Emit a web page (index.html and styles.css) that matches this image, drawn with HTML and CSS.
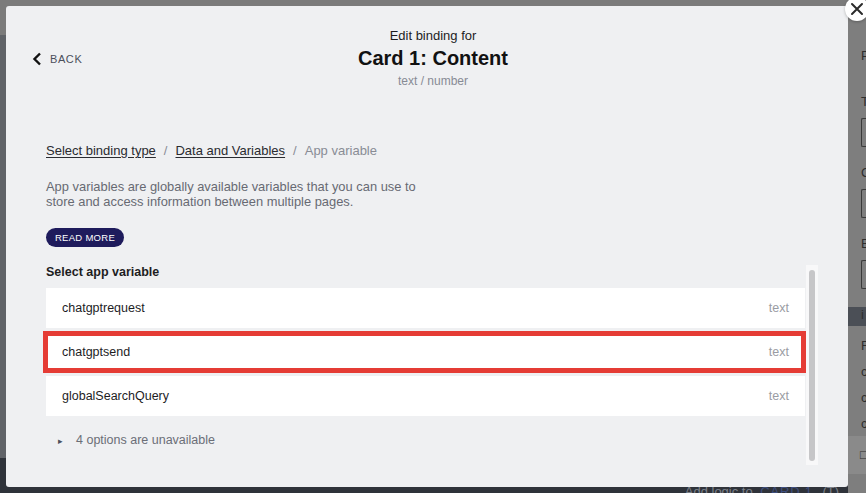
FILE: index.html
```html
<!DOCTYPE html>
<html lang="en">
<head>
    <meta charset="UTF-8">
    <meta name="viewport" content="width=device-width, initial-scale=1.0">
    <title>Edit binding</title>
    <link rel="stylesheet" href="styles.css">
</head>
<body>
    <div class="app">
        <div class="canvas">
            <div class="canvas-top"></div>
            <div class="canvas-mid"></div>
            <div class="canvas-bottom">
                <span class="logic">Add logic to <span class="logic-card">CARD 1</span> (T)</span>
            </div>
        </div>
        <div class="props">
            <div class="props-label first">P</div>
            <div class="props-label">T</div>
            <div class="props-box"></div>
            <div class="props-label">C</div>
            <div class="props-box"></div>
            <div class="props-label">E</div>
            <div class="props-box"></div>
            <div class="props-band">i</div>
            <div class="props-label small">F</div>
            <div class="props-label small">c</div>
            <div class="props-label small">c</div>
            <div class="props-label small">c</div>
            <div class="props-light">&#9633;</div>
        </div>
    </div>

    <div class="modal">
        <button class="close-btn" aria-label="Close">
            <svg width="14" height="14" viewBox="0 0 14 14"><path d="M2 2 L12 12 M12 2 L2 12" stroke="#2b2b2b" stroke-width="2" stroke-linecap="round"/></svg>
        </button>

        <div class="modal-header">
            <a class="back">
                <svg width="10" height="14" viewBox="0 0 10 14"><path d="M8 1.5 L2.5 7 L8 12.5" fill="none" stroke="#111" stroke-width="2.4"/></svg>
                <span>BACK</span>
            </a>
            <div class="title-block">
                <div class="title-pre">Edit binding for</div>
                <div class="title">Card 1: Content</div>
                <div class="title-sub">text / number</div>
            </div>
            <div></div>
        </div>

        <div class="modal-body">
            <div class="crumbs">
                <a class="crumb-link">Select binding type</a>
                <span class="crumb-sep">/</span>
                <a class="crumb-link">Data and Variables</a>
                <span class="crumb-sep">/</span>
                <span class="crumb-current">App variable</span>
            </div>

            <p class="desc">App variables are globally available variables that you can use to<br>store and access information between multiple pages.</p>

            <button class="read-more">READ MORE</button>

            <div class="scroll-area">
                <div class="scroll-content">
                    <div class="list-title">Select app variable</div>
                    <div class="var-list">
                        <div class="var-item"><span>chatgptrequest</span><span class="var-type">text</span></div>
                        <div class="var-item marked"><span>chatgptsend</span><span class="var-type">text</span></div>
                        <div class="var-item"><span>globalSearchQuery</span><span class="var-type">text</span></div>
                    </div>
                    <div class="unavailable"><span class="caret">&#9656;</span>4 options are unavailable</div>
                </div>
                <div class="scrollbar"><div class="thumb"></div></div>
            </div>
        </div>
    </div>
</body>
</html>
```

FILE: styles.css
```css
body {
    margin: 0;
    width: 866px;
    height: 493px;
    overflow: hidden;
    position: relative;
    font-family: "Liberation Sans", Arial, sans-serif;
    background-color: #7b7b7b;
}

/* dimmed app behind the dialog */
.app {
    display: flex;
    height: 493px;
}

.canvas {
    flex: 1;
    display: flex;
    flex-direction: column;
}

.canvas-top {
    height: 35px;
    background-color: #7b7b7b;
}

.canvas-mid {
    flex: 1;
    background-color: #606368;
}

.canvas-bottom {
    height: 35px;
    background-color: #2f333a;
    display: flex;
    justify-content: flex-end;
    padding-right: 9px;
}

.logic {
    font-size: 13px;
    line-height: 16px;
    color: #7c818a;
    padding-top: 26px;
}

.logic-card {
    color: #3f4f80;
    margin: 0 6px 0 4px;
    letter-spacing: 0.8px;
}

.props {
    width: 18px;
    background-color: #7e7e7e;
    padding-top: 48px;
    padding-left: 13px;
    box-sizing: border-box;
    color: #2e2e2e;
    font-size: 13px;
}

.props-label {
    height: 16px;
    line-height: 16px;
    margin-bottom: 22px;
}

.props-label.first {
    margin-bottom: 30px;
}

.props-box {
    height: 27px;
    border: 1px solid #3a3a3a;
    border-right: none;
    border-radius: 2px 0 0 2px;
    margin-top: -14px;
    margin-bottom: 18px;
}

.props-band {
    margin-left: -13px;
    margin-top: 4px;
    height: 19px;
    background-color: #4b4f56;
    padding-left: 13px;
    margin-bottom: 12px;
}

.props-label.small {
    margin-bottom: 10px;
}

.props-light {
    margin-left: -13px;
    padding-left: 12px;
    height: 38px;
    line-height: 38px;
    background-color: #8a8a8a;
    margin-top: -6px;
}

/* dialog */
.modal {
    position: absolute;
    left: 6px;
    top: 6px;
    width: 842px;
    height: 481px;
    background-color: #eff0f2;
    border-radius: 3px;
    box-sizing: border-box;
}

.close-btn {
    position: absolute;
    left: 839px;
    top: -9px;
    width: 24px;
    height: 24px;
    border-radius: 50%;
    border: none;
    background-color: #ffffff;
    box-shadow: 0 1px 3px rgba(0, 0, 0, 0.25);
    padding: 0;
    display: flex;
    align-items: center;
    justify-content: center;
}

.modal-header {
    display: grid;
    grid-template-columns: 1fr auto 1fr;
    align-items: center;
    padding-top: 20px;
    padding-left: 12px;
}

.back {
    display: flex;
    align-items: center;
    gap: 8px;
    padding-left: 14px;
    font-size: 11px;
    letter-spacing: 0.6px;
    color: #4b4f5b;
}

.title-block {
    text-align: center;
}

.title-pre {
    font-size: 13px;
    line-height: 18px;
    color: #1d1d1f;
    margin-top: 1px;
}

.title {
    font-size: 20px;
    font-weight: bold;
    line-height: 26px;
    color: #111111;
}

.title-sub {
    font-size: 12px;
    line-height: 20px;
    color: #878b95;
}

.modal-body {
    padding: 51px 30px 0 40px;
}

.crumbs {
    display: flex;
    gap: 8px;
    font-size: 13px;
    line-height: 18px;
}

.crumb-link {
    color: #2a2b30;
    text-decoration: underline;
    text-underline-offset: 2px;
}

.crumb-sep,
.crumb-current {
    color: #898c95;
}

.desc {
    margin: 19px 0 0;
    font-size: 12.9px;
    line-height: 15px;
    color: #676a73;
}

.read-more {
    display: block;
    margin-top: 19px;
    height: 19px;
    width: 78px;
    padding: 0;
    border: none;
    border-radius: 10px;
    background-color: #1e1b5c;
    color: #ffffff;
    font-family: inherit;
    font-size: 9.5px;
    letter-spacing: 0.3px;
}

.scroll-area {
    display: flex;
    gap: 1px;
    margin-top: 18px;
    height: 200px;
}

.scroll-content {
    flex: 1;
}

.list-title {
    font-size: 12.5px;
    font-weight: bold;
    line-height: 14px;
    color: #1d1d1f;
}

.var-list {
    display: flex;
    flex-direction: column;
    gap: 4px;
    margin-top: 9px;
}

.var-item {
    position: relative;
    height: 40px;
    background-color: #ffffff;
    display: flex;
    align-items: center;
    justify-content: space-between;
    padding: 0 16px;
    font-size: 12.5px;
    color: #1d1d1f;
}

.var-type {
    color: #9a9ca3;
}

/* red annotation around the chosen row */
.var-item.marked::after {
    content: "";
    position: absolute;
    top: -1px;
    bottom: -1px;
    left: -3px;
    right: -1px;
    border: 5px solid #e53c35;
}

.unavailable {
    margin-top: 16px;
    padding-left: 12px;
    font-size: 12.5px;
    line-height: 16px;
    color: #6b6e77;
}

.caret {
    font-size: 9px;
    color: #4b4f5b;
    margin-right: 13px;
}

.scrollbar {
    width: 12px;
    background-color: #f8f8f9;
    padding: 5px 3px 4px;
    box-sizing: border-box;
}

.thumb {
    height: 100%;
    border-radius: 4px;
    background-color: #c6c6c8;
}
```
